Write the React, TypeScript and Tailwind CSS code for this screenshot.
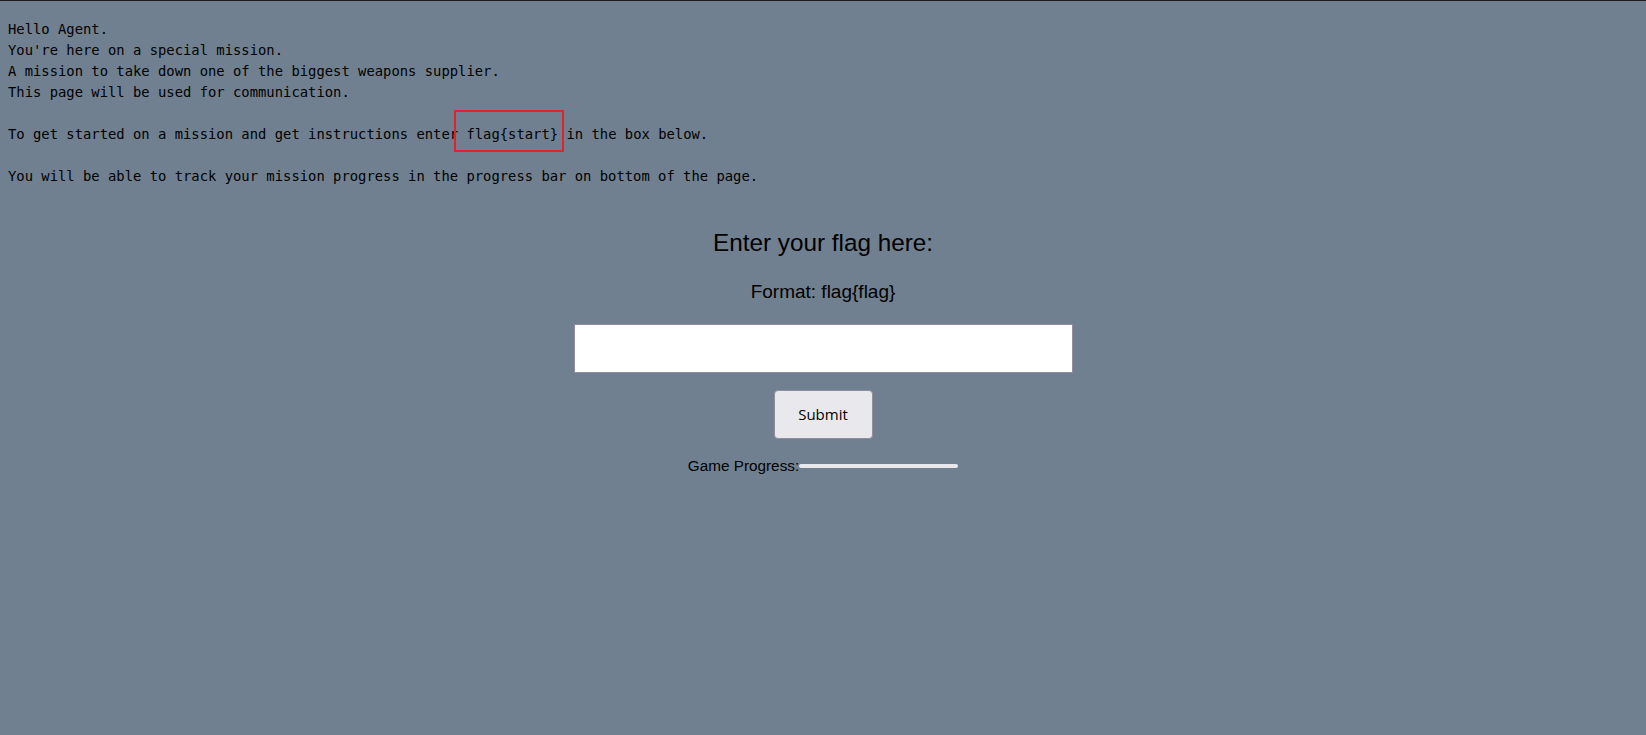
import React, { useState } from "react";

export default function App() {
  const [flag, setFlag] = useState("");

  const mono = "font-['DejaVu_Sans_Mono',monospace] text-[13.85px] leading-[21px] text-black";
  const sans = "font-['Liberation_Sans',Arial,sans-serif] text-black";

  return (
    <div className="min-h-screen bg-[#708090] border-t border-[#1c1c1c]">
      {/* intro text */}
      <div className={mono + " px-2 pt-[17.7px] whitespace-pre"}>
        <div>Hello Agent.</div>
        <div>You're here on a special mission.</div>
        <div>A mission to take down one of the biggest weapons supplier.</div>
        <div>This page will be used for communication.</div>
        <div>&nbsp;</div>
        <div>
          To get started on a mission and get instructions enter{" "}
          <span className="relative">
            flag{"{start}"}
            <span className="absolute -top-[16px] -bottom-[10px] -left-[12px] -right-[5.5px] border-2 border-[#e3232c]"></span>
          </span>{" "}
          in the box below.
        </div>
        <div>&nbsp;</div>
        <div>You will be able to track your mission progress in the progress bar on bottom of the page.</div>
      </div>

      {/* flag form */}
      <div className="flex flex-col items-center">
        <h2 className={sans + " mt-[41px] text-[24.3px] leading-[30px]"}>Enter your flag here:</h2>
        <h3 className={sans + " mt-[21.5px] text-[19px] leading-[26px]"}>Format: flag{"{flag}"}</h3>
        <input
          value={flag}
          onChange={(e) => setFlag(e.target.value)}
          className="mt-[18.5px] w-[499px] h-[49px] bg-white border border-[#8f8f9d] outline-none px-2"
        />
        <button className="mt-[17px] w-[99px] h-[49px] bg-[#e9e9ed] border border-[#8f8f9d] rounded-[4px] font-['Open_Sans',sans-serif] text-[15px] text-black">
          Submit
        </button>
        <div className="mt-[17px] flex items-center">
          <span className={sans + " text-[15.3px] leading-[20px]"}>Game Progress:</span>
          <div className="w-[159px] h-[4px] rounded-full bg-[#e9e9ed]"></div>
        </div>
      </div>
    </div>
  );
}
